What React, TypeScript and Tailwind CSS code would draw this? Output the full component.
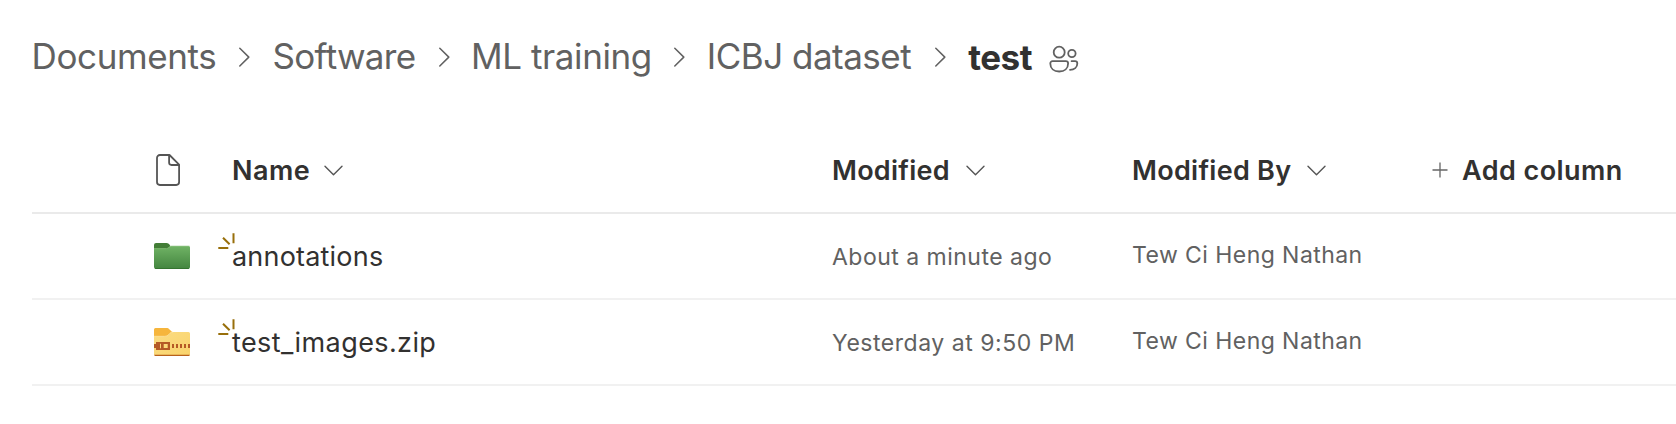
import type { ReactNode } from "react";

const crumbs = [
  { label: "Documents", className: "w-[241px] pr-[22.2px] tracking-[-0.4px]" },
  { label: "Software", className: "w-[198.5px] pr-[21.5px] tracking-[-0.71px]" },
  { label: "ML training", className: "w-[235.7px] pr-[21.5px] tracking-[-0.42px]" },
  { label: "ICBJ dataset", className: "w-[261.5px] pr-[22px] tracking-[-0.5px]" },
];

const ROW = "ml-8 grid grid-cols-[200px_600px_300px_300px_1fr] items-center border-b-2";

function ChevronRight() {
  return (
    <svg className="h-[20px] w-[11px] shrink-0" viewBox="0 0 11 20" fill="none" stroke="#616161" strokeWidth="1.5" strokeLinecap="round" strokeLinejoin="round">
      <path d="M0.8 1.2 9.8 10.1 0.8 19" />
    </svg>
  );
}

function ChevronDown() {
  return (
    <svg className="h-[11px] w-[19px] shrink-0" viewBox="0 0 19 11" fill="none" stroke="#555" strokeWidth="1.4" strokeLinecap="round" strokeLinejoin="round">
      <path d="M1 1.2 9.5 9.8 18 1.2" />
    </svg>
  );
}

function People() {
  return (
    <svg className="h-[28px] w-[30px] shrink-0" viewBox="0 0 30 28" fill="none" stroke="#616161" strokeWidth="1.8" strokeLinecap="round" strokeLinejoin="round">
      <circle cx="10.2" cy="7.2" r="5.5" />
      <circle cx="22.9" cy="8.5" r="3.7" />
      <path d="M3.6 16.2h13.2a2.3 2.3 0 0 1 2.3 2.3c0 5-3.6 8-8.9 8s-8.9-3-8.9-8a2.3 2.3 0 0 1 2.3-2.3Z" />
      <path d="M22.600 16.2h3.400a2.3 2.3 0 0 1 2.3 2.3c0 3.9-3 6.300-7.300 6.300" />
    </svg>
  );
}

function FileIcon() {
  return (
    <svg className="h-[32px] w-[24px]" viewBox="0 0 24 32" fill="none" stroke="#555" strokeWidth="1.8" strokeLinejoin="round">
      <path d="M3.9 1h9.600l9.600 9.700v17.400a2.900 2.900 0 0 1-2.900 2.900H3.900A2.900 2.900 0 0 1 1 28.100V3.900A2.900 2.900 0 0 1 3.900 1Z" />
      <path d="M13.100 1v7.600a2.400 2.400 0 0 0 2.400 2.400h7.500" />
    </svg>
  );
}

function FolderIcon() {
  return (
    <svg className="h-[26px] w-[36px]" viewBox="0 0 36 26">
      <defs>
        <linearGradient id="folder" x1="0" y1="0" x2="0" y2="1">
          <stop offset="0" stopColor="#70b365" />
          <stop offset="1" stopColor="#43853f" />
        </linearGradient>
      </defs>
      <path d="M0 2a2 2 0 0 1 2-2h10.500c1.500 0 3 1 3.900 3v3H0Z" fill="#427d36" />
      <path d="M0 6h12.500c2.300 0 2.500-3 5-3H34.500A1.500 1.500 0 0 1 36 4.500v19.500a2 2 0 0 1-2 2H2a2 2 0 0 1-2-2Z" fill="url(#folder)" />
      <path d="M0 5.600h12.500c2.300 0 2.500-2.400 5-2.400H35.500" fill="none" stroke="#8cc47e" strokeWidth="0.8" />
      <path d="M1.200 25.500h33.600" stroke="#34742f" strokeWidth="1" />
    </svg>
  );
}

function ZipIcon() {
  return (
    <svg className="h-[28px] w-[36px]" viewBox="0 0 36 28">
      <defs>
        <linearGradient id="zip" x1="0" y1="0" x2="1" y2="1">
          <stop offset="0" stopColor="#fbdc83" />
          <stop offset="1" stopColor="#f9d36b" />
        </linearGradient>
      </defs>
      <path d="M0 1.500A1.500 1.500 0 0 1 1.500 0h10.800c1.300 0 2.300.5 3.200 1.400L18.200 4v5H0Z" fill="#f6b53c" />
      <path d="M0 8.500h10.500c2.200 0 3.200-.6 4.500-2l1-1.100c.9-1 1.600-1.400 3-1.400h15.500A1.500 1.500 0 0 1 36 5.500v20.500a2 2 0 0 1-2 2H2a2 2 0 0 1-2-2Z" fill="url(#zip)" />
      <path d="M0 8.300h10.500c2.200 0 3.200-.6 4.500-2l1-1.100c.9-.9 1.600-1.200 3-1.200" fill="none" stroke="#fdebb5" strokeWidth="0.7" />
      <path d="M0 26.800c.3.800 1 1.200 2 1.200h32c1 0 1.700-.4 2-1.200Z" fill="#b8611b" />
      <path d="M0 16h2v-2h14v8H2v-2H0Z" fill="#b55a25" />
      <path d="M9.700 16h4v4h-4ZM6 15.800h1v4.400H6Z" fill="#fbd978" />
      <path d="M18 16h2v4h-2ZM22 16h2v4h-2ZM26 16h2v4h-2ZM30 16h2v4h-2ZM34 16h2v4h-2Z" fill="#b55a25" />
    </svg>
  );
}

function NewMark() {
  return (
    <svg className="absolute -left-[14px] -top-[2px] h-[17px] w-[18px]" viewBox="0 0 18 17" fill="none" stroke="#986f0b" strokeWidth="2">
      <path d="M15.500 0.300v10M5 4.700l6.600 6.600M0.300 15.100h10" />
    </svg>
  );
}

function Heading({ children, className }: { children: ReactNode; className: string }) {
  return <button className={`flex items-center text-[27px] font-semibold text-[#323130] ${className}`}>{children}</button>;
}

const files = [
  { name: "annotations", tracking: "tracking-[0.2px]", icon: <FolderIcon />, date: "About a minute ago", dateTracking: "tracking-[0.48px]" },
  { name: "test_images.zip", tracking: "tracking-[0.4px]", icon: <ZipIcon />, date: "Yesterday at 9:50 PM", dateTracking: "tracking-[0.53px]" },
];

export default function App() {
  return (
    <main className="h-[424px] w-full overflow-hidden whitespace-nowrap bg-white font-['Inter',sans-serif]">
      <nav className="flex h-32 items-start pl-[31.6px]">
        <ol className="flex h-[113px] items-center text-[35px] text-[#616161]">
          {crumbs.map((c) => (
            <li key={c.label} className={`flex items-center justify-between ${c.className}`}>
              {c.label}
              <ChevronRight />
            </li>
          ))}
          <li className="flex items-center gap-[17px] font-bold tracking-[-0.5px] text-[#323130]">
            <span className="pt-px">test</span>
            <span className="pt-[5px]">
              <People />
            </span>
          </li>
        </ol>
      </nav>

      <div className={`${ROW} h-[86px] border-[#eaeaea]`}>
        <div className="pl-[124px]">
          <FileIcon />
        </div>
        <Heading className="gap-[14px] tracking-[0.5px]">
          <span className="pt-[2px]">Name</span> <ChevronDown />
        </Heading>
        <Heading className="gap-[16px] tracking-[0.25px]">
          <span className="pt-[2px]">Modified</span> <ChevronDown />
        </Heading>
        <Heading className="gap-[16px] tracking-[0.28px]">
          <span className="pt-[2px]">Modified By</span> <ChevronDown />
        </Heading>
        <Heading className="gap-[14px] tracking-[0.44px]">
          <svg className="h-[16px] w-[16px]" viewBox="0 0 16 16" stroke="#666" strokeWidth="1.3">
            <path d="M8 0.500v15M0.500 8h15" />
          </svg>
          <span className="pt-[2px]">Add column</span>
        </Heading>
      </div>

      {files.map((f) => (
        <div key={f.name} className={`${ROW} h-[86px] border-[#f1f1f1]`}>
          <div className="pl-[122px]">{f.icon}</div>
          <div className={`relative pt-[2px] text-[27px] text-[#323130] ${f.tracking}`}>
            <NewMark />
            {f.name}
          </div>
          <div className={`pt-[3px] text-[23px] text-[#616161] ${f.dateTracking}`}>{f.date}</div>
          <div className="pb-px text-[23px] tracking-[0.44px] text-[#616161]">Tew Ci Heng Nathan</div>
        </div>
      ))}
    </main>
  );
}
